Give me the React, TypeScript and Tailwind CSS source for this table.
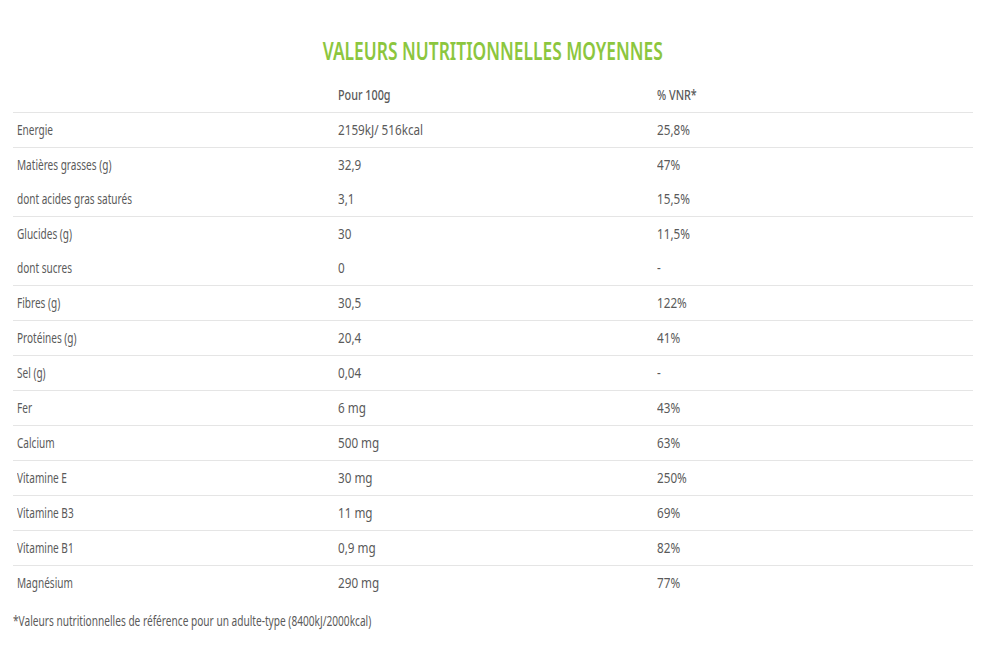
const rows: { label: string; value: string; vnr: string; line: boolean }[] = [
  { label: "Energie", value: "2159kJ/ 516kcal", vnr: "25,8%", line: true },
  { label: "Matières grasses (g)", value: "32,9", vnr: "47%", line: false },
  { label: "dont acides gras saturés", value: "3,1", vnr: "15,5%", line: true },
  { label: "Glucides (g)", value: "30", vnr: "11,5%", line: false },
  { label: "dont sucres", value: "0", vnr: "-", line: true },
  { label: "Fibres (g)", value: "30,5", vnr: "122%", line: true },
  { label: "Protéines (g)", value: "20,4", vnr: "41%", line: true },
  { label: "Sel (g)", value: "0,04", vnr: "-", line: true },
  { label: "Fer", value: "6 mg", vnr: "43%", line: true },
  { label: "Calcium", value: "500 mg", vnr: "63%", line: true },
  { label: "Vitamine E", value: "30 mg", vnr: "250%", line: true },
  { label: "Vitamine B3", value: "11 mg", vnr: "69%", line: true },
  { label: "Vitamine B1", value: "0,9 mg", vnr: "82%", line: true },
  { label: "Magnésium", value: "290 mg", vnr: "77%", line: false },
];

// the site font is a narrow geometric face; we squeeze Noto Sans to get close
const label = "inline-block origin-left scale-x-[0.67] whitespace-nowrap";
const num = "inline-block origin-left scale-x-[0.78] whitespace-nowrap";
const head = "inline-block origin-left scale-x-[0.72] whitespace-nowrap";

export default function App() {
  return (
    <div className="min-h-screen bg-white px-[13px] pt-[35px] font-['Noto_Sans',sans-serif] text-[#5a5a5a]">
      <h2 className="mb-[12px] pr-[9px] text-center text-[25px] font-semibold leading-[30px] text-[#8cc63e]">
        <span className="inline-block origin-center scale-x-[0.695] whitespace-nowrap">
          VALEURS NUTRITIONNELLES MOYENNES
        </span>
      </h2>

      <table className="w-[960px] table-fixed border-collapse text-[15px]">
        <thead>
          <tr className="h-[35px] border-b border-[#e5e5e5]">
            <th className="w-1/3 px-[4px] text-left font-normal"></th>
            <th className="w-1/3 px-[5px] text-left font-medium">
              <span className={head}>Pour 100g</span>
            </th>
            <th className="w-1/3 px-[4px] text-left font-medium">
              <span className={head}>% VNR*</span>
            </th>
          </tr>
        </thead>
        <tbody>
          {rows.map((r) => (
            <tr
              key={r.label}
              className={r.line ? "h-[35px] border-b border-[#e5e5e5]" : "h-[34px]"}
            >
              <td className="px-[4px]">
                <span className={label}>{r.label}</span>
              </td>
              <td className="px-[5px]">
                <span className={num}>{r.value}</span>
              </td>
              <td className="px-[4px]">
                <span className={num}>{r.vnr}</span>
              </td>
            </tr>
          ))}
        </tbody>
      </table>

      <p className="mt-[11px] text-[15px] leading-[20px]">
        <span className="inline-block origin-left scale-x-[0.675] whitespace-nowrap">
          *Valeurs nutritionnelles de référence pour un adulte-type (8400kJ/2000kcal)
        </span>
      </p>
    </div>
  );
}
